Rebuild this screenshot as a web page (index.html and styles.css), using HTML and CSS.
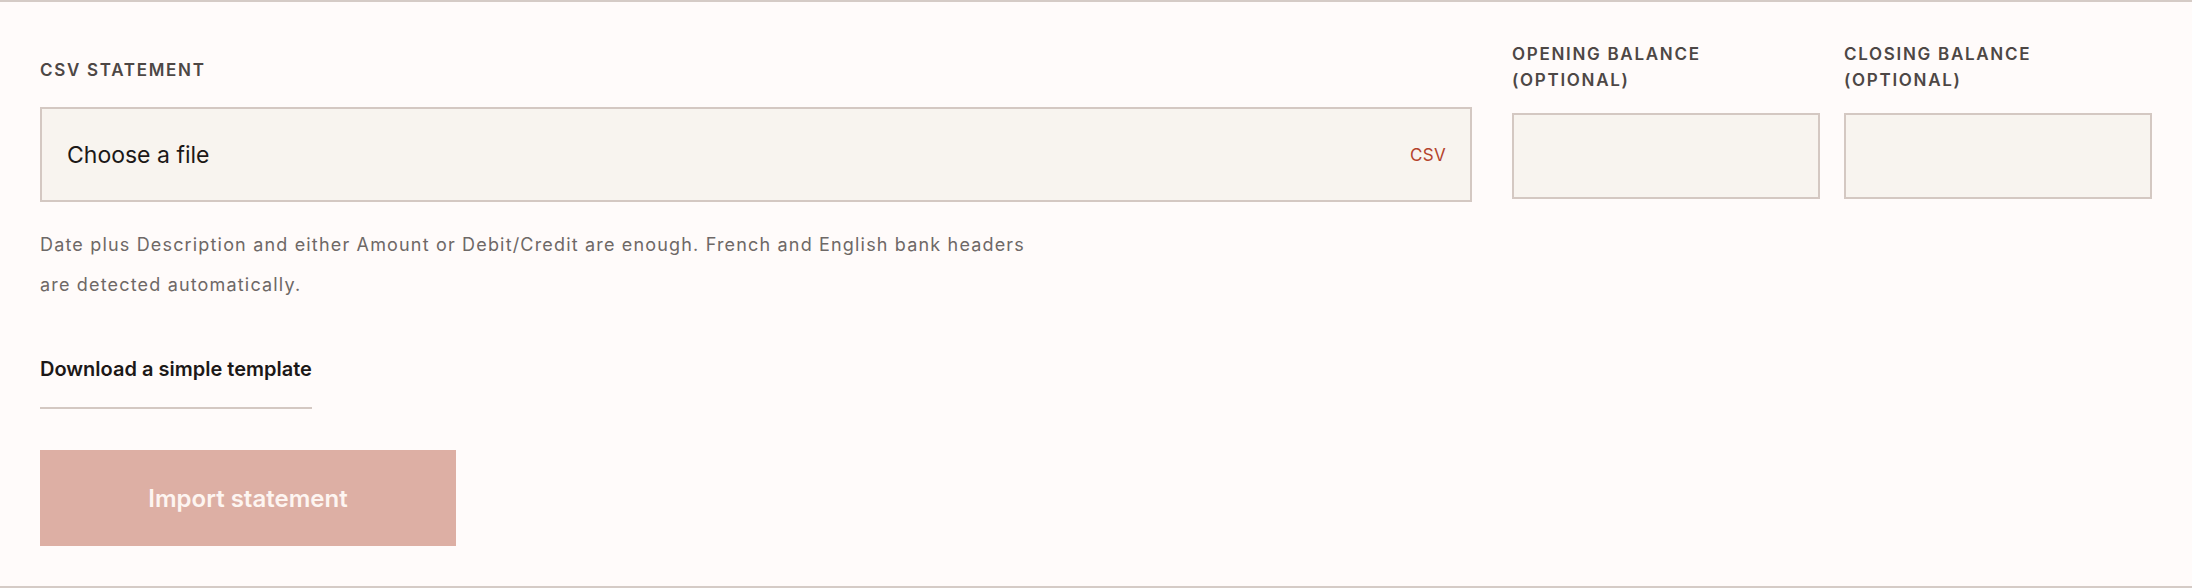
FILE: index.html
```html
<!DOCTYPE html>
<html lang="en">
<head>
<meta charset="utf-8">
<title>Import statement</title>
<link rel="stylesheet" href="styles.css">
</head>
<body>
<section class="panel">
  <div class="top-row">
    <div class="field field-file">
      <label class="label" for="csv">CSV statement</label>
      <div class="file-box" id="csv">
        <span class="file-text">Choose a file</span>
        <span class="file-ext">CSV</span>
      </div>
    </div>
    <div class="balances">
      <div class="field balance">
        <label class="label label-2" for="open">Opening balance <span class="opt">(optional)</span></label>
        <div class="input" id="open"></div>
      </div>
      <div class="field balance">
        <label class="label label-2" for="close">Closing balance <span class="opt">(optional)</span></label>
        <div class="input" id="close"></div>
      </div>
    </div>
  </div>
  <p class="help">Date plus Description and either Amount or Debit/Credit are enough. French and English bank headers are detected automatically.</p>
  <a class="template-link" href="#">Download a simple template</a>
  <div class="actions">
    <button class="btn" type="button">Import statement</button>
  </div>
</section>
</body>
</html>
```

FILE: styles.css
```css
* { box-sizing: border-box; }
html, body { margin: 0; padding: 0; }
body {
  background: #fffbfa;
  font-family: Inter, "Liberation Sans", sans-serif;
  width: 2192px;
  height: 588px;
  overflow: hidden;
}
.panel {
  height: 588px;
  border-top: 2px solid #d5cbc6;
  border-bottom: 2px solid #d5cbc6;
  padding: 40px 40px 0 40px;
  display: flex;
  flex-direction: column;
}
.top-row {
  display: flex;
  align-items: flex-end;
  gap: 40px;
}
.field { display: flex; flex-direction: column; }
.field-file { flex: 1; }
.label {
  display: block;
  font-size: 17px;
  font-weight: 600;
  letter-spacing: 0.1em;
  text-transform: uppercase;
  color: #4d4745;
  line-height: 26px;
  margin-bottom: 24px;
}
.label-2 {
  line-height: 25.5px;
  margin-bottom: 20px;
}
.opt { display: block; }
.file-box {
  height: 95px;
  border: 2px solid #d4c8c2;
  background: #f8f4ef;
  display: flex;
  align-items: center;
  justify-content: space-between;
  padding: 0 24px 0 25px;
}
.file-text {
  font-size: 23px;
  color: #1c1817;
}
.file-ext {
  font-size: 17px;
  color: #b4432c;
  letter-spacing: 0.02em;
}
.balances {
  display: flex;
  gap: 24px;
  padding-bottom: 3px;
}
.balance { width: 308px; }
.input {
  height: 86px;
  border: 2px solid #d4c8c2;
  background: #f8f4ef;
}
.help {
  margin: 23px 0 0 0;
  max-width: 1000px;
  font-size: 18px;
  line-height: 40px;
  letter-spacing: 0.065em;
  color: #6e6866;
}
.template-link {
  align-self: flex-start;
  margin-top: 50px;
  font-size: 20px;
  font-weight: 600;
  line-height: 28px;
  color: #1c1817;
  text-decoration: none;
  padding-bottom: 24px;
  border-bottom: 2px solid #d4c8c2;
}
.actions { margin-top: 41px; }
.btn {
  width: 416px;
  height: 96px;
  border: 0;
  background: #ddafa4;
  color: #fdf5f1;
  font-family: inherit;
  font-size: 24px;
  font-weight: 600;
  cursor: pointer;
}
```
